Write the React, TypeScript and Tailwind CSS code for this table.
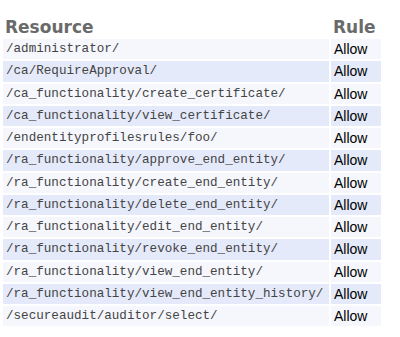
const rules = [
  "/administrator/",
  "/ca/RequireApproval/",
  "/ca_functionality/create_certificate/",
  "/ca_functionality/view_certificate/",
  "/endentityprofilesrules/foo/",
  "/ra_functionality/approve_end_entity/",
  "/ra_functionality/create_end_entity/",
  "/ra_functionality/delete_end_entity/",
  "/ra_functionality/edit_end_entity/",
  "/ra_functionality/revoke_end_entity/",
  "/ra_functionality/view_end_entity/",
  "/ra_functionality/view_end_entity_history/",
  "/secureaudit/auditor/select/",
];

export default function App() {
  return (
    <div className="h-[337px] w-[400px] bg-white pl-[3px] pt-[15px]">
      <div className="grid grid-cols-[326px_50px] gap-x-[2px] gap-y-[2px]">
        {/* header */}
        <div className="h-[22px] pl-[2px] font-['DejaVu_Sans',sans-serif] text-[17px] font-bold leading-[25px] text-[#6a6a6a]">
          Resource
        </div>
        <div className="h-[22px] pl-[2px] font-['DejaVu_Sans',sans-serif] text-[17px] font-bold leading-[25px] text-[#6a6a6a]">
          Rule
        </div>

        {rules.map((r, i) => {
          const bg = i % 2 === 0 ? "bg-[#f5f7fd]" : "bg-[#e4eafa]";
          return [
            <div
              key={r}
              className={`${bg} h-[20.25px] pl-[3px] font-['Liberation_Mono',monospace] text-[12.6px] leading-[21px] text-[#444]`}
            >
              {r}
            </div>,
            <div
              key={r + "-rule"}
              className={`${bg} h-[20.25px] pl-[3px] font-['Liberation_Sans',Arial,sans-serif] text-[14px] leading-[21px] text-black`}
            >
              Allow
            </div>,
          ];
        })}
      </div>
    </div>
  );
}
